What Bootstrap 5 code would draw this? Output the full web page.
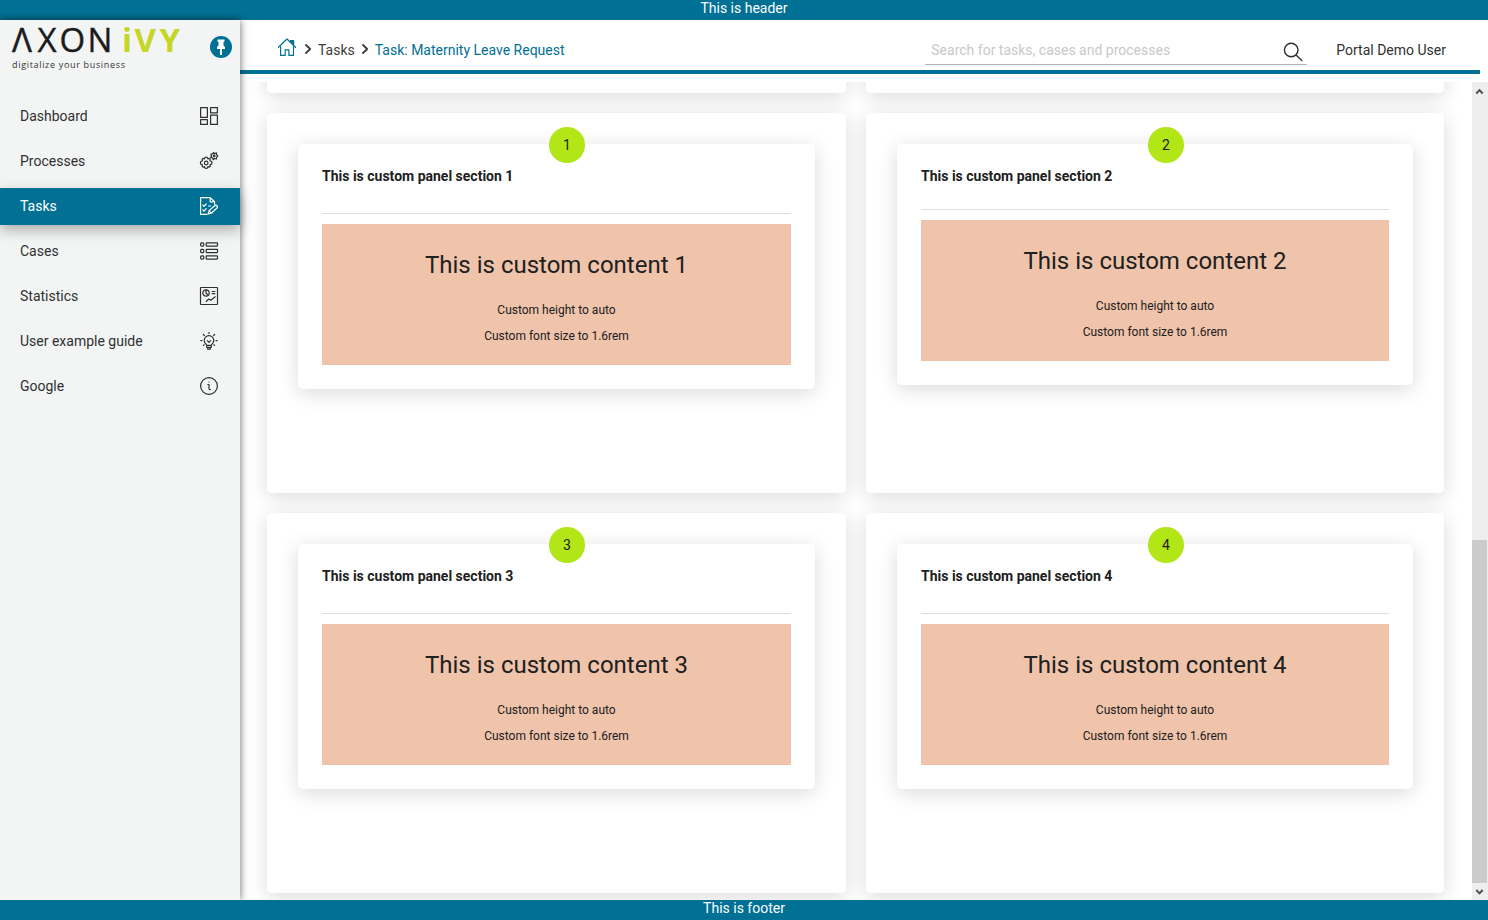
<!DOCTYPE html>
<html lang="en">
<head>
<meta charset="utf-8">
<title>Axon Ivy Portal</title>
<link href="https://cdn.jsdelivr.net/npm/bootstrap@5.3.0/dist/css/bootstrap.min.css" rel="stylesheet">
<style>
:root { --ivy: #007095; }
body { font-family: Roboto, "Liberation Sans", sans-serif; font-size: 14px; line-height: 16px; color: #202020; background: #fff; }
svg { display: block; flex: none; }
.ico { fill: none; stroke: currentColor; stroke-width: 1.2; stroke-linejoin: round; stroke-linecap: round; }
.page-strip { height: 20px; background: var(--ivy); color: #fff; flex: none; }
.side { width: 240px; background: #f3f5f5; box-shadow: 0 0 8px rgba(0,0,0,.6); z-index: 3; clip-path: inset(-8px -20px 0 0); }
.brand-row { height: 78px; padding: 0 8px 0 0; }
.brand-row svg { overflow: visible; }
.pin { width: 22px; height: 22px; background: var(--ivy); margin-top: 16px; }
.side-link { height: 37px; margin-bottom: 8px; padding: 0 21px 1px 20px; color: #303030; text-decoration: none; }
.side-link.active { background: var(--ivy); color: #fff; box-shadow: 0 5px 14px rgba(0,0,0,.3); }
.topbar { height: 54px; margin-right: 8px; border-bottom: 4px solid var(--ivy); flex: none; padding: 0 34px 0 38px; }
.crumb-home { color: var(--ivy); margin-bottom: 6px; }
.crumb-sep { color: #404040; stroke-width: 1.9; margin: 0 5px 3px 8px; }
.crumb-sep.second { margin: 0 5px 3px 6px; }
.crumb-link { color: #404040; }
.crumb-now { color: var(--ivy); }
.search { width: 382px; height: 29px; margin-top: 16px; padding: 0 4px 0 6px; border-bottom: 1px solid #b4b4b4; color: #c8c8c8; }
.user { height: 60px; padding-left: 29px; color: #303030; }
.content-scroll { margin-top: 8px; min-height: 0; }
.panels { display: grid; grid-template-columns: 579px 578px; grid-template-rows: 11px 380px 380px; gap: 20px; padding: 0 28px 0 27px; overflow: hidden; isolation: isolate; }
.tile, .panel { background: #fff; border-radius: 5px; }
.panel, .tile::before { box-shadow: 0 4px 20px rgba(0,0,0,.15); }
/* tile shadows sit on a layer below every tile so neighbours stay white */
.tile::before { content: ""; position: absolute; inset: 0; border-radius: 5px; z-index: -1; }
.tile { padding: 31px; }
.tile.cut { padding: 0; border-top-left-radius: 0; border-top-right-radius: 0; }
.tile.cut::before { top: -60px; }
.panel { padding: 24px; }
.panel h2 { font-size: 14px; font-weight: 700; line-height: 16px; margin: 0 0 29px; }
.panel.tight h2 { margin-bottom: 25px; }
.rule { height: 1px; background: #dcdedf; margin-bottom: 10px; }
.step { position: absolute; top: 14px; left: 282px; width: 36px; height: 36px; background: #b3e617; }
.custom { height: 141px; background: #f0c4ab; font-size: 12px; line-height: 14px; padding-top: 27px; }
.custom h3 { font-size: 24px; font-weight: 400; line-height: 28px; margin: 0 0 24px; }
.custom p { margin: 0 0 12px; }
.scroller { width: 16px; background: #eee; color: #505050; flex: none; }
.thumb { width: 15px; height: 343px; background: #cbcbcb; }
</style>
</head>
<body class="vh-100 d-flex flex-column overflow-hidden">
<header class="page-strip text-center">This is header</header>
<div class="d-flex flex-grow-1" style="min-height:0">
  <nav class="side position-relative flex-shrink-0">
    <div class="brand-row d-flex justify-content-between">
      <svg width="190" height="56" viewBox="0 0 190 56">
        <g font-family="Open Sans">
          <text x="12 37.5 59.5 87.500" y="32" font-size="33" fill="#1c1c1c" stroke="#1c1c1c" stroke-width=".4">ΛXON</text>
          <text x="122 134.500 159.500" y="32" font-size="33" font-weight="700" fill="#c5d628">iVY</text>
          <text x="12" y="48" font-size="9" textLength="113" fill="#333">digitalize your business</text>
        </g>
      </svg>
      <div class="pin rounded-circle d-flex align-items-center justify-content-center">
        <svg width="12" height="18" viewBox="0 0 12 18" fill="#fff"><path d="M2.500 1.500h7v2l-1 .5v3.500l1.500 1.500v2H2V9l1.500-1.500V4l-1-.5z"/><path d="M5 11h2v6H5z"/></svg>
      </div>
    </div>
    <a class="side-link d-flex align-items-center justify-content-between">Dashboard
      <svg class="ico" width="20" height="20" viewBox="-1 -1 20 20"><path d="M.6.600h6.800v9.800H.6zM10.600.600h6.800v5.300h-6.800zM.6 12.600h6.800v4.800H.6zM10.600 8.100h6.800v9.300h-6.800z"/></svg></a>
    <a class="side-link d-flex align-items-center justify-content-between">Processes
      <svg class="ico" width="20" height="20" viewBox="-1 -1 20 20"><path d="M5 5.500l1.200-.5 1.200.5.500 1.300 1.400-.4 1 .9-.3 1.400 1.600.8.400 1.300-.4 1.300-1.600.7.300 1.400-1 .9-1.400-.4-.5 1.300-1.200.5-1.200-.5-.5-1.300-1.400.4-1-.9.300-1.400-1.600-.7L.4 10.800l.4-1.300 1.600-.8-.3-1.400 1-.9 1.400.4z"/><circle cx="6.200" cy="11" r="1.800"/><path d="M13.300.500l1.300 1.200 1.800-.8.200 1.800 1.300 1.200-1.300 1.200-.2 1.900-1.800-.5-1.300 1.200-.8-1.800-1.800-.5.800-1.500-.6-1.700 1.800-.2z"/><circle cx="14.200" cy="4" r=".8"/></svg></a>
    <a class="side-link active d-flex align-items-center justify-content-between">Tasks
      <svg class="ico" width="20" height="20" viewBox="-1 -1 20 20"><path d="M7 17.400H.6V.6h9.600l4.400 4.200v2.400M10.200.600v4.200h4.400M2.800 8.200l1.200 1.200 2.200-2.400M2.800 12.900l1.200 1.200 2.200-2.400M8.500 9h2M8.200 17l.8-3.200 6-5.300c1.300-1 3.200.9 2.200 2.300l-5.800 5.400zM9 13.800l2.400 2.400"/></svg></a>
    <a class="side-link d-flex align-items-center justify-content-between">Cases
      <svg class="ico" width="20" height="20" viewBox="-1 -1 20 20"><rect x=".6" y=".9" width="3.200" height="3.200" rx="1"/><rect x=".6" y="7.400" width="3.200" height="3.200" rx="1"/><rect x=".6" y="13.900" width="3.200" height="3.200" rx="1"/><rect x="6.200" y=".9" width="11.300" height="3.200" rx=".5"/><rect x="6.200" y="7.400" width="11.300" height="3.200" rx=".5"/><rect x="6.200" y="13.900" width="11.300" height="3.200" rx=".5"/></svg></a>
    <a class="side-link d-flex align-items-center justify-content-between">Statistics
      <svg class="ico" width="20" height="20" viewBox="-1 -1 20 20"><rect x=".5" y=".5" width="17" height="17" rx=".5"/><circle cx="6" cy="6" r="3.200"/><path d="M6 2.800V6l2.200 2.300M12.200 4.500h2.600M12.200 6.700h2.600M6.300 14.300l2.300-2.200 2.200 1.200 4.400-3.500"/></svg></a>
    <a class="side-link d-flex align-items-center justify-content-between">User example guide
      <svg class="ico" width="20" height="20" viewBox="-1 -1 20 20"><path d="M6.600 13.300c0-1.200-2.400-2-2.400-4.800a4.800 4.800 0 0 1 9.600 0c0 2.800-2.400 3.600-2.400 4.800zM6.700 13.300v2h4.600v-2M7.700 15.400v1.800h2.600v-1.800M7.300 8.700L9 10.400l1.700-1.700M9 .4v1.200M.8 8.600H2M16 8.600h1.200M3.300 2.500l1.200 1.200M14.700 2.500l-1.200 1.200M3.400 13.400l.8-.6M14.600 13.400l-.8-.6"/></svg></a>
    <a class="side-link d-flex align-items-center justify-content-between">Google
      <svg class="ico" width="20" height="20" viewBox="-1 -1 20 20"><circle cx="9" cy="9" r="8.400"/><path d="M7.800 7.500H9v4.200c0 .7.500.9 1.400.9M8.900 5h.1"/></svg></a>
  </nav>
  <main class="flex-grow-1 d-flex flex-column" style="min-width:0">
    <div class="topbar d-flex align-items-start justify-content-between">
      <div class="d-flex align-items-center" style="height:60px">
        <svg class="ico crumb-home" width="18" height="18" viewBox="0 0 18 18"><path d="M.5 9.300L9 1l8.500 8.300M2.600 8.700v8.700h4.600v-5.500h3.700v5.500h4.600V8.700M12.500 3h3v4"/><path d="M12.500 2.500h3v4z" fill="currentColor"/></svg>
        <svg class="ico crumb-sep" width="9" height="12" viewBox="0 0 9 12"><path d="M2 2l4.200 4L2 10"/></svg>
        <span class="crumb-link">Tasks</span>
        <svg class="ico crumb-sep second" width="9" height="12" viewBox="0 0 9 12"><path d="M2 2l4.200 4L2 10"/></svg>
        <span class="crumb-now">Task: Maternity Leave Request</span>
      </div>
      <div class="d-flex align-items-start">
        <div class="search d-flex align-items-center justify-content-between">Search for tasks, cases and processes
          <svg class="ico" width="20" height="20" viewBox="0 0 20 20" style="color:#303030;stroke-width:1.400;margin-top:3px"><circle cx="8.200" cy="8" r="6.800"/><path d="M13 13l5.800 5.500"/></svg></div>
        <div class="user d-flex align-items-center">Portal Demo User</div>
      </div>
    </div>
    <div class="content-scroll flex-grow-1 d-flex">
      <div class="panels flex-grow-1">
        <div class="tile cut position-relative"></div>
        <div class="tile cut position-relative"></div>
        <section class="tile position-relative">
          <div class="panel"><h2>This is custom panel section 1</h2><div class="rule"></div>
            <div class="custom text-center"><h3>This is custom content 1</h3><p>Custom height to auto</p><p>Custom font size to 1.6rem</p></div></div>
          <span class="step rounded-circle d-flex align-items-center justify-content-center">1</span>
        </section>
        <section class="tile position-relative">
          <div class="panel tight"><h2>This is custom panel section 2</h2><div class="rule"></div>
            <div class="custom text-center"><h3>This is custom content 2</h3><p>Custom height to auto</p><p>Custom font size to 1.6rem</p></div></div>
          <span class="step rounded-circle d-flex align-items-center justify-content-center">2</span>
        </section>
        <section class="tile position-relative">
          <div class="panel"><h2>This is custom panel section 3</h2><div class="rule"></div>
            <div class="custom text-center"><h3>This is custom content 3</h3><p>Custom height to auto</p><p>Custom font size to 1.6rem</p></div></div>
          <span class="step rounded-circle d-flex align-items-center justify-content-center">3</span>
        </section>
        <section class="tile position-relative">
          <div class="panel"><h2>This is custom panel section 4</h2><div class="rule"></div>
            <div class="custom text-center"><h3>This is custom content 4</h3><p>Custom height to auto</p><p>Custom font size to 1.6rem</p></div></div>
          <span class="step rounded-circle d-flex align-items-center justify-content-center">4</span>
        </section>
      </div>
      <div class="scroller d-flex flex-column justify-content-between">
        <svg width="15" height="17" viewBox="0 0 15 17" fill="none" stroke="currentColor" stroke-width="2"><path d="M4.300 11.500l3.200-3.400 3.200 3.400"/></svg>
        <div>
          <div class="thumb"></div>
          <svg width="15" height="17" viewBox="0 0 15 17" fill="none" stroke="currentColor" stroke-width="2"><path d="M4.300 7l3.200 3.400L10.700 7"/></svg>
        </div>
      </div>
    </div>
  </main>
</div>
<footer class="page-strip text-center position-relative z-3">This is footer</footer>
<script src="https://cdn.jsdelivr.net/npm/bootstrap@5.3.0/dist/js/bootstrap.bundle.min.js"></script>
</body>
</html>
